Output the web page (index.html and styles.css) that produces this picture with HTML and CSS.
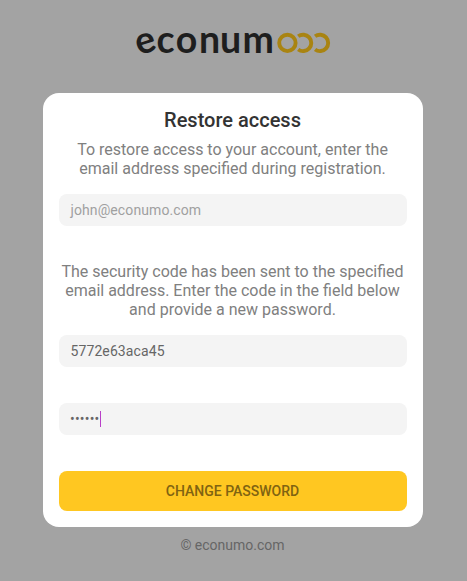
FILE: index.html
```html
<!DOCTYPE html>
<html lang="en">
<head>
<meta charset="utf-8">
<title>Restore access</title>
<link rel="stylesheet" href="styles.css">
</head>
<body>
<main class="page">
  <svg class="logo" width="230" height="80" viewBox="118 0 230 80" role="img" aria-label="econumo">
    <g class="logo-text">
      <text x="0" y="0" transform="translate(139 55.6) rotate(-18)">e</text>
      <text x="156.5 175.8 198.9 220 242.6" y="53">conum</text>
    </g>
    <g class="logo-rings">
      <circle cx="287.4" cy="42.9" r="8.2"/>
      <path d="M298.2 36.3A8.2 8.2 0 1 1 298.2 49.5"/>
      <path d="M315.1 36.3A8.2 8.2 0 1 1 315.1 49.5"/>
    </g>
  </svg>
  <form class="card">
    <h1 class="title">Restore access</h1>
    <p class="hint">To restore access to your account, enter the<br>email address specified during registration.</p>
    <div class="field field-muted">john@econumo.com</div>
    <p class="hint hint-code">The security code has been sent to the specified<br>email address. Enter the code in the field below<br>and provide a new password.</p>
    <div class="field">5772e63aca45</div>
    <div class="field field-password"><span class="dots">••••••</span><span class="caret"></span></div>
    <button class="submit" type="button">CHANGE PASSWORD</button>
  </form>
  <footer class="footer">© econumo.com</footer>
</main>
</body>
</html>
```
FILE: styles.css
```css
* { box-sizing: border-box; }
body {
  margin: 0;
  background: #a3a3a3;
  font-family: Roboto, "Liberation Sans", sans-serif;
}
.page {
  display: flex;
  flex-direction: column;
  align-items: center;
  height: 581px;
  padding: 0 1px 0 0;
}
.logo { display: block; flex: none; margin-bottom: 13px; }
.logo-text { font: 700 37.5px Lato, sans-serif; fill: #1e1e1e; }
.logo-rings { fill: none; stroke: #a98412; stroke-width: 3.9; }
.card {
  width: 380px;
  height: 434px;
  padding: 16px;
  border-radius: 16px;
  background: #fff;
}
.title {
  margin: 0;
  padding-right: 1px;
  font-size: 20px;
  font-weight: 500;
  line-height: 23px;
  text-align: center;
  color: #333;
}
.hint {
  margin: 8px -8px 16px;
  padding-right: 1px;
  font-size: 16px;
  line-height: 19px;
  text-align: center;
  color: #808080;
}
.hint-code { margin-top: 36px; }
.field {
  display: flex;
  align-items: center;
  height: 32px;
  padding: 0 11.5px;
  border-radius: 8px;
  background: #f4f4f4;
  font-size: 14px;
  letter-spacing: 0.1px;
  color: #666;
}
.field-muted { color: #a0a0a0; }
.field-password { margin-top: 36px; padding-left: 11px; }
.dots { width: 30px; letter-spacing: 0.2px; }
.caret { width: 1px; height: 16px; background: #b83fc8; }
.submit {
  display: block;
  width: 100%;
  height: 40px;
  margin-top: 36px;
  padding: 0 1px 0 0;
  border: 0;
  border-radius: 8px;
  background: #ffc721;
  font: 500 14px Roboto, sans-serif;
  color: #806311;
}
.footer {
  margin-top: 10px;
  padding-right: 1px;
  font-size: 14px;
  line-height: 16px;
  color: #666;
}
```
